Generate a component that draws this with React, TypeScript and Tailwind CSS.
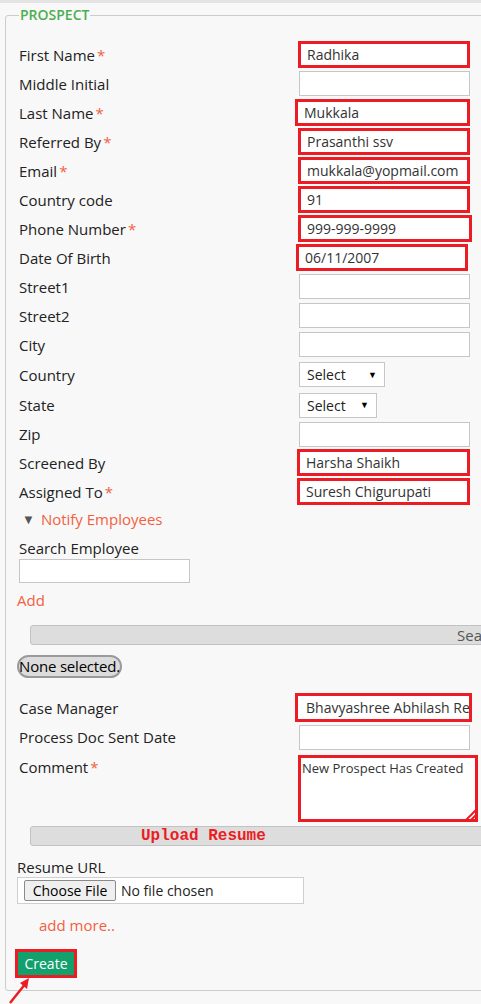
import React from 'react';

const label = 'text-[15px] leading-[22px] text-[#222]';
const coral = 'text-[#f2603f]';

function Star() {
  return <span className={`${coral} ml-[2px]`}>*</span>;
}

interface RowProps {
  name: string;
  req?: boolean;
  h?: string;
  children?: React.ReactNode;
}

function Row({ name, req, h = 'h-[29px]', children }: RowProps) {
  return (
    <div className={`grid grid-cols-[280px_1fr] items-center ${h}`}>
      <div className={label}>
        {name}
        {req && <Star />}
      </div>
      <div className="flex items-center">{children}</div>
    </div>
  );
}

function Plain({ h = 'h-[25px]' }: { h?: string }) {
  return <div className={`w-[171px] ${h} bg-white border border-[#c6c6c6]`} />;
}

function Marked({ value, cls = 'ml-[-1px] w-[172px]' }: { value: string; cls?: string }) {
  return (
    <div className={`${cls} h-[27px] bg-white border-[3px] border-[#ec1c24] flex items-center pl-[6px] text-[14px] text-[#333] overflow-hidden whitespace-nowrap`}>
      {value}
    </div>
  );
}

function SelectBox({ w }: { w: string }) {
  return (
    <div className={`${w} h-[25px] bg-white border border-[#c6c6c6] flex items-center justify-between pl-[7px] pr-[7px] text-[14px] text-[#222]`}>
      <span>Select</span>
      <span className="text-[9px] text-black">▼</span>
    </div>
  );
}

export default function App() {
  return (
    <div className="w-[481px] h-[1004px] overflow-hidden bg-[#f8f8f8] relative font-['Open_Sans',sans-serif]">
      <div className="h-[3px] bg-[#e4e4e4]" />
      <div className="flex items-start">
        <div className="w-px h-[410px] mt-[11px] ml-[2px] bg-[#cfcfcf]" />
        <fieldset className="ml-[3px] mt-[2px] w-[520px] shrink-0 border border-[#cccccc] rounded-[3px] pl-[13px] pt-[15px] pb-[12px] m-0">
          <legend className="px-[1px] text-[14px] leading-[20px] font-semibold text-[#4cae50]">PROSPECT</legend>

          <Row name="First Name" req><Marked value="Radhika" /></Row>
          <Row name="Middle Initial"><Plain /></Row>
          <Row name="Last Name" req><Marked value="Mukkala" cls="ml-[-4px] w-[175px]" /></Row>
          <Row name="Referred By" req><Marked value="Prasanthi ssv" /></Row>
          <Row name="Email" req><Marked value="mukkala@yopmail.com" /></Row>
          <Row name="Country code"><Marked value="91" /></Row>
          <Row name="Phone Number" req><Marked value="999-999-9999" cls="ml-[-1px] w-[174px]" /></Row>
          <Row name="Date Of Birth"><Marked value="06/11/2007" cls="ml-[-3px] w-[172px]" /></Row>
          <Row name="Street1"><Plain /></Row>
          <Row name="Street2"><Plain /></Row>
          <Row name="City"><Plain /></Row>
          <Row name="Country" h="h-[31px]"><SelectBox w="w-[86px]" /></Row>
          <Row name="State" h="h-[30px]"><SelectBox w="w-[78px]" /></Row>
          <Row name="Zip" h="h-[28px]"><Plain /></Row>
          <Row name="Screened By"><Marked value="Harsha Shaikh" cls="ml-[-2px] w-[173px]" /></Row>
          <Row name="Assigned To" req><Marked value="Suresh Chigurupati" cls="ml-[-2px] w-[173px]" /></Row>

          <div className="h-[27px] flex items-center pl-[3px]">
            <span className="text-[13px] leading-[13px] text-[#555] mr-[6px]">▼</span>
            <span className={`text-[15px] ${coral}`}>Notify Employees</span>
          </div>

          <div className={`${label} mt-[4px]`}>Search Employee</div>
          <div className="w-[171px] h-[24px] bg-white border border-[#c6c6c6]" />
          <div className={`text-[15px] leading-[22px] ${coral} ml-[-2px] mt-[6px]`}>Add</div>

          <div className="ml-[11px] mt-[14px] w-[800px] h-[20px] bg-[#dddddd] border border-[#c2c2c2] rounded-[3px] flex items-center pl-[426px] text-[15px] text-[#555]">
            Search Employees
          </div>

          <div className="ml-[-2px] mt-[10px] w-[105px] h-[23px] rounded-full bg-[#dcdcdc] border-2 border-[#9a9a9a] flex items-center justify-center text-[15px] text-black tracking-[-0.2px]">
            None selected.
          </div>

          <div className="grid grid-cols-[280px_1fr] items-center h-[29px] mt-[15px]">
            <div className={label}>Case Manager</div>
            <div className="ml-[-4px] w-[177px] h-[29px] bg-white border-[3px] border-[#ec1c24] flex items-center pl-[8px] text-[14px] text-[#333] overflow-hidden whitespace-nowrap">
              Bhavyashree Abhilash Reddy
            </div>
          </div>
          <Row name="Process Doc Sent Date" h="h-[30px]"><Plain /></Row>

          <div className="grid grid-cols-[280px_1fr] items-start mt-[3px]">
            <div className={`${label} mt-[1px]`}>
              Comment
              <Star />
            </div>
            <div className="relative ml-[-1px] w-[180px] h-[67px] bg-white border-[3px] border-[#ec1c24] pl-[1px] pt-[1px] text-[13px] leading-[18px] text-[#333]">
              New Prospect Has Created
              <svg className="absolute right-[-3px] bottom-[-3px]" width="18" height="18" viewBox="0 0 18 18">
                <path d="M4 18 L18 4 M9 18 L18 9 M14 18 L18 14" stroke="#ec1c24" strokeWidth="2" />
              </svg>
            </div>
          </div>

          <div className="ml-[11px] mt-[4px] w-[800px] h-[20px] bg-[#dddddd] border border-[#c2c2c2] rounded-[3px] flex items-center pl-[110px] font-['Liberation_Mono',monospace] font-bold text-[16px] text-[#ec1c24]">
            Upload Resume
          </div>

          <div className={`${label} ml-[-2px] mt-[10px] h-[21px]`}>Resume URL</div>
          <div className="ml-[-2px] w-[287px] h-[27px] bg-white border border-[#cfcfcf] flex items-center pl-[6px]">
            <div className="w-[92px] h-[21px] bg-[#efefef] border border-[#8a8a8a] rounded-[2px] flex items-center justify-center text-[14px] text-black">
              Choose File
            </div>
            <span className="ml-[5px] text-[14px] text-[#222]">No file chosen</span>
          </div>

          <div className={`text-[15px] leading-[22px] ${coral} ml-[20px] mt-[10px]`}>add more..</div>

          <div className="ml-[-4px] mt-[13px] w-[62px] h-[29px] border-[3px] border-[#ec1c24] bg-[#12a06c] flex items-center justify-center text-[14px] text-white">
            Create
          </div>
        </fieldset>
      </div>

      <svg className="absolute left-0 top-[970px]" width="40" height="34" viewBox="0 0 40 34">
        <path d="M10 33 L26 13" stroke="#ec1c24" strokeWidth="2.5" />
        <path d="M29 8 L20 13 L27 19 Z" fill="#ec1c24" />
      </svg>
    </div>
  );
}
